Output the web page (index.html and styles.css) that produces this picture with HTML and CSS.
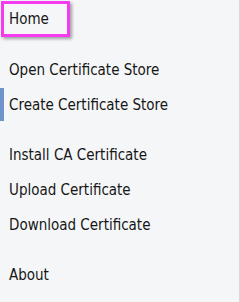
FILE: index.html
```html
<!DOCTYPE html>
<html lang="en">
<head>
  <meta charset="UTF-8" />
  <title>Certificate Menu</title>
  <link rel="stylesheet" href="styles.css">
</head>
<body>
  <nav class="side-nav">
    <div class="nav-group">
      <a href="#" class="nav-item focused">Home</a>
    </div>
    <div class="nav-group">
      <a href="#" class="nav-item">Open Certificate Store</a>
      <a href="#" class="nav-item active">Create Certificate Store</a>
    </div>
    <div class="nav-group">
      <a href="#" class="nav-item">Install CA Certificate</a>
      <a href="#" class="nav-item">Upload Certificate</a>
      <a href="#" class="nav-item">Download Certificate</a>
    </div>
    <div class="nav-group">
      <a href="#" class="nav-item">About</a>
    </div>
  </nav>
</body>
</html>
```

FILE: styles.css
```css
* {
  margin: 0;
  padding: 0;
  box-sizing: border-box;
}

html, body {
  height: 100%;
}

body {
  background: #f5f6f8;
  font-family: "DejaVu Sans Condensed", "DejaVu Sans", Verdana, sans-serif;
  font-size: 15px;
  color: #161616;
}

.side-nav {
  height: 100%;
  border-right: 1px solid #d9d9d9;
  display: flex;
  flex-direction: column;
  gap: 15px;
  padding-top: 2px;
}

.nav-group {
  display: flex;
  flex-direction: column;
}

.nav-item {
  display: flex;
  align-items: center;
  height: 35px;
  padding-left: 9px;
  color: inherit;
  text-decoration: none;
  position: relative;
}

.nav-item.active::before {
  content: "";
  position: absolute;
  left: 0;
  top: 1px;
  bottom: 1px;
  width: 4px;
  background: #6f94cc;
}

.nav-item.focused {
  align-self: flex-start;
  margin-left: 1px;
  padding: 0 18px 0 5px;
  height: 36px;
  margin-top: -1px;
  border: 3px solid #f43bf0;
  box-shadow: 2px 2px 3px rgba(0, 0, 0, 0.35);
}
```
